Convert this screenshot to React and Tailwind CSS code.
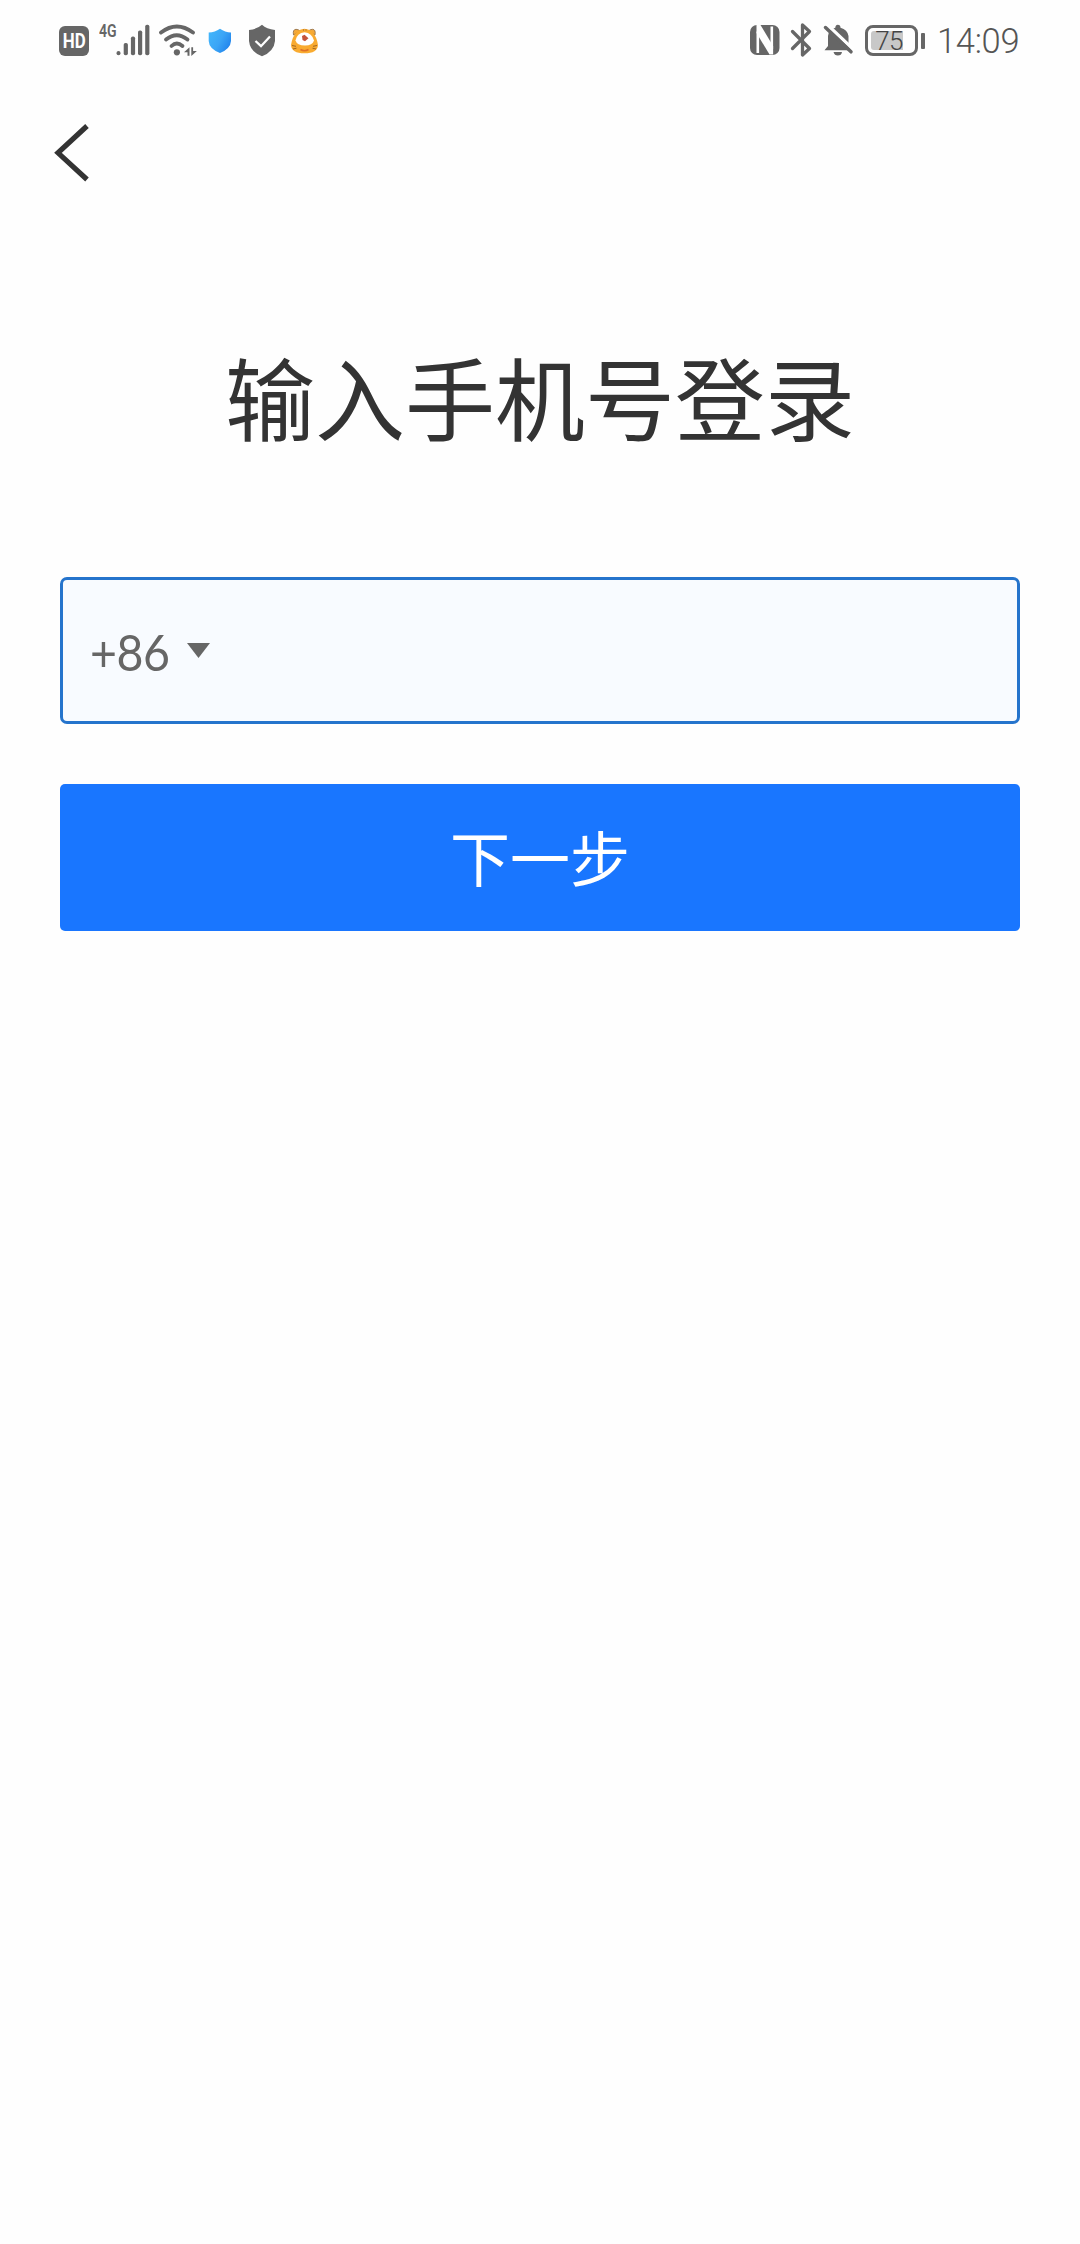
const GREY = '#666666';

function HdIcon() {
  return (
    <div className="mt-[26px] ml-[59px] flex h-[30px] w-[30px] items-center justify-center rounded-[6px] bg-[#666666] font-['Roboto',sans-serif] text-[18px] leading-none font-bold text-white">
      <span className="scale-x-[0.94] scale-y-110">HD</span>
    </div>
  );
}

function SignalIcon() {
  return (
    <svg className="mt-[24px] -ml-px h-[32px] w-[34px]" viewBox="116 24 34 32" fill={GREY}>
      <rect x="116.5" y="51" width="4" height="4.3" rx="2" />
      <rect x="123.7" y="43" width="4.2" height="12.3" rx="1.8" />
      <rect x="130.9" y="36.5" width="4.2" height="18.8" rx="1.8" />
      <rect x="138" y="30.5" width="4.2" height="24.8" rx="1.8" />
      <rect x="145.2" y="24.8" width="4.2" height="30.5" rx="1.8" />
    </svg>
  );
}

function WifiIcon() {
  return (
    <svg className="mt-[23px] ml-[8px] h-[34px] w-[40px]" viewBox="158 23 40 34" fill="none" stroke={GREY} strokeLinecap="round">
      <path d="M161 32.5Q176.700 20.500 193 32.500" strokeWidth="3.8" />
      <path d="M166 39.500Q176.700 31 187.500 39.500" strokeWidth="3.8" />
      <path d="M171.500 46Q176.700 41 182.500 46" strokeWidth="3.8" />
      <circle cx="176.900" cy="52.300" r="3.100" fill={GREY} stroke="none" />
      <path d="M184 52.300l5.500-5v8.500h-2v-3.500zM191.300 47.300h1.800v3.600h3.800l-5.600 5z" fill={GREY} stroke="none" />
    </svg>
  );
}

function BlueShield() {
  return (
    <svg className="mt-[28px] ml-[10px] h-[26px] w-[24px]" viewBox="208 28 24 26">
      <defs>
        <linearGradient id="shield" x1="0" y1="0.2" x2="1" y2="0.8">
          <stop offset="0" stopColor="#42b5fb" />
          <stop offset="0.5" stopColor="#3ba5f6" />
          <stop offset="1" stopColor="#1d7feb" />
        </linearGradient>
      </defs>
      <path d="M220 28.700Q225 32.300 231 32.500V41Q230.500 48.800 220 53Q209 48.800 208.700 41V32.500Q215 32.300 220 28.700Z" fill="url(#shield)" />
    </svg>
  );
}

function CheckShield() {
  return (
    <svg className="mt-[24px] ml-[16px] h-[33px] w-[28px]" viewBox="248 24 28 33">
      <path d="M262 24.800Q266.500 29 275 30V41Q274 51.500 262 56.300Q250 51.500 249 41V30Q257.500 29 262 24.800Z" fill={GREY} />
      <path d="M255.500 41L261 46.200L270 36.500" fill="none" stroke="white" strokeWidth="2.300" />
    </svg>
  );
}

function TigerIcon() {
  return (
    <svg className="mt-[27px] ml-[14px] h-[28px] w-[28px]" viewBox="290 27 28 28">
      <path d="M293.500 35Q292.500 29.500 296 29.300Q298.500 29.300 300 31ZM315 35Q316 29.500 312.500 29.300Q310 29.300 308.500 31Z" fill="#f3a83a" stroke="#8a6740" strokeWidth="0.800" />
      <path d="M291 45Q293.500 29.500 304.500 28.800Q315.500 29.500 318 45Q317.500 53.300 304.500 53.300Q291.500 53.300 291 45Z" fill="#f9ab30" />
      <path d="M292 45.500l4 .8M293 49l3.500-.8M317 45.500l-4 .8M316 49l-3.500-.8" stroke="#a2651f" strokeWidth="1" />
      <path d="M295.500 40.500Q297 33 304.500 32.300Q312 33 314 40.500Q312.500 45.500 305 45.500Q297 45.500 295.500 40.500Z" fill="white" />
      <path d="M302 36l2.500-1.200 4 3.500-3.500 3-2.500-1.300z" fill="#c4533a" />
      <path d="M303.500 29v2M306 29v2" stroke="#b87a30" strokeWidth="0.800" />
      <path d="M300.500 49.500q4 2.500 8 0" fill="none" stroke="#df6f26" strokeWidth="1.600" />
    </svg>
  );
}

function NfcIcon() {
  return (
    <svg className="mt-[24px] h-[32px] w-[32px]" viewBox="749 24 32 32">
      <rect x="750" y="25" width="29.500" height="30" rx="7" fill={GREY} />
      <path d="M757.800 53V31.500M771.800 26.500V49" fill="none" stroke="white" strokeWidth="2.600" />
      <path d="M756.500 25H760.500L773.100 46V54.500H769.500L756.500 33Z" fill="white" />
    </svg>
  );
}

function BluetoothIcon() {
  return (
    <svg className="mt-[22px] ml-[9px] h-[36px] w-[23px]" viewBox="790 22 23 36">
      <path d="M792.500 31.500L809.500 48.500L802.500 55V25L809.500 31.500L792.500 48.500" fill="none" stroke={GREY} strokeWidth="3.300" strokeLinecap="round" strokeLinejoin="round" />
    </svg>
  );
}

function BellOffIcon() {
  return (
    <svg className="mt-[23px] ml-[10px] h-[34px] w-[31px]" viewBox="823 23 31 34">
      <path d="M826.500 50.300H851L848.500 46V36Q847.500 29.500 840.500 27.700Q840.500 24.800 837.800 24.800Q835.500 24.800 835.300 27.700Q828.500 29.500 828 36V46L824.500 50.300Z" fill={GREY} />
      <path d="M833.500 52H842Q841.500 55.500 837.800 55.500Q834.500 55.500 833.500 52Z" fill={GREY} />
      <path d="M827 24.500L855 51" stroke="white" strokeWidth="3.500" />
      <path d="M825.500 27.500L851 51.800" stroke={GREY} strokeWidth="3.500" strokeLinecap="round" />
    </svg>
  );
}

function Battery() {
  return (
    <div className="mt-[25px] ml-[11px] flex items-center gap-[3px]">
      <div className="flex h-[31px] w-[53px] rounded-[8px] border-[3px] border-[#666666] p-[3px]">
        <div className="flex h-[19px] w-[32px] items-center justify-end rounded-l-[3px] bg-[#c8c8c8] font-['Roboto',sans-serif] text-[26px] leading-none font-light tracking-[-0.5px] text-[#444444]">
          <span>75</span>
        </div>
      </div>
      <div className="h-[16px] w-[4px] rounded-[1px] bg-[#666666]" />
    </div>
  );
}

function StatusBar() {
  return (
    <div className="flex h-[80px] items-start">
      <HdIcon />
      <div className="mt-[23px] ml-[10px] w-[18px] font-['Roboto',sans-serif] text-[19px] leading-[16px] font-semibold text-[#666666]">
        <span className="inline-block origin-left scale-x-[0.74]">4G</span>
      </div>
      <SignalIcon />
      <WifiIcon />
      <BlueShield />
      <CheckShield />
      <TigerIcon />
      <div className="flex-1" />
      <NfcIcon />
      <BluetoothIcon />
      <BellOffIcon />
      <Battery />
      <div className="mt-[21px] ml-[12px] mr-[59px] w-[84px] font-['Roboto',sans-serif] text-[34.500px] leading-[40px] font-light tracking-[-0.3px] whitespace-nowrap text-[#555555]">
        14:09
      </div>
    </div>
  );
}

export default function App() {
  return (
    <div className="min-h-[2244px] w-full bg-[#fefefe] font-['Noto_Sans_CJK_SC',sans-serif]">
      <StatusBar />
      <button aria-label="返回" className="mt-[42px] ml-[52px] block h-[62px] w-[38px]">
        <svg className="h-full w-full" viewBox="52 122 38 62" fill="none" stroke="#333333" strokeWidth="5.200">
          <path d="M87 126L58 152.800L87 179.500" />
        </svg>
      </button>
      <h1 className="mt-[151px] text-center text-[90px] leading-[120px] font-normal text-[#333333]">输入手机号登录</h1>
      <div className="mx-[60px] mt-[122px] flex h-[147px] items-center rounded-[7px] border-[3px] border-[#2574cc] bg-[#f8fbff] pl-[27px]">
        <span className="mt-[3px] w-[83px] font-['Lato',sans-serif] text-[50px] leading-[60px] text-[#666666]">
          <span className="inline-block origin-left scale-x-[0.93] tracking-[-0.5px]">+86</span>
        </span>
        <svg className="ml-[14px] h-[15px] w-[23px]" viewBox="0 0 23 15" fill={GREY}>
          <path d="M0 0H23L11.500 15Z" />
        </svg>
      </div>
      <button className="mx-[60px] mt-[60px] flex h-[147px] w-[960px] items-center justify-center rounded-[5px] bg-[#1976ff] pb-[3px] text-[60px] leading-none text-white">
        下一步
      </button>
    </div>
  );
}
